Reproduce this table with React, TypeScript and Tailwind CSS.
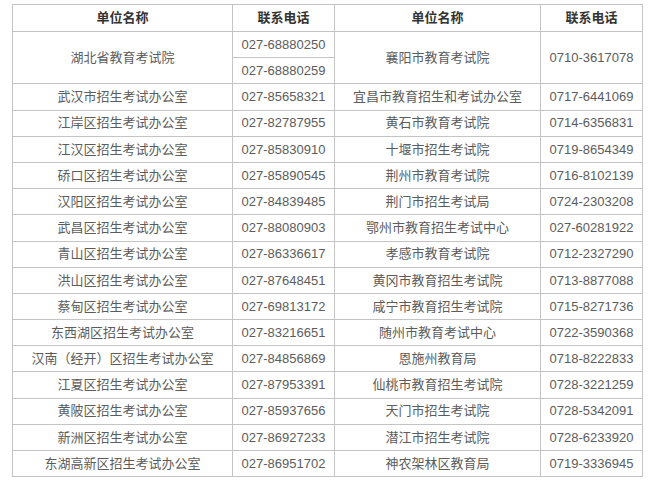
import React from "react";

type Row = { left: string; leftTel: string | string[]; right: string; rightTel: string };

const rows: Row[] = [
  { left: "湖北省教育考试院", leftTel: ["027-68880250", "027-68880259"], right: "襄阳市教育考试院", rightTel: "0710-3617078" },
  { left: "武汉市招生考试办公室", leftTel: "027-85658321", right: "宜昌市教育招生和考试办公室", rightTel: "0717-6441069" },
  { left: "江岸区招生考试办公室", leftTel: "027-82787955", right: "黄石市教育考试院", rightTel: "0714-6356831" },
  { left: "江汉区招生考试办公室", leftTel: "027-85830910", right: "十堰市招生考试院", rightTel: "0719-8654349" },
  { left: "硚口区招生考试办公室", leftTel: "027-85890545", right: "荆州市教育考试院", rightTel: "0716-8102139" },
  { left: "汉阳区招生考试办公室", leftTel: "027-84839485", right: "荆门市招生考试局", rightTel: "0724-2303208" },
  { left: "武昌区招生考试办公室", leftTel: "027-88080903", right: "鄂州市教育招生考试中心", rightTel: "027-60281922" },
  { left: "青山区招生考试办公室", leftTel: "027-86336617", right: "孝感市教育考试院", rightTel: "0712-2327290" },
  { left: "洪山区招生考试办公室", leftTel: "027-87648451", right: "黄冈市教育招生考试院", rightTel: "0713-8877088" },
  { left: "蔡甸区招生考试办公室", leftTel: "027-69813172", right: "咸宁市教育招生考试院", rightTel: "0715-8271736" },
  { left: "东西湖区招生考试办公室", leftTel: "027-83216651", right: "随州市教育考试中心", rightTel: "0722-3590368" },
  { left: "汉南（经开）区招生考试办公室", leftTel: "027-84856869", right: "恩施州教育局", rightTel: "0718-8222833" },
  { left: "江夏区招生考试办公室", leftTel: "027-87953391", right: "仙桃市教育招生考试院", rightTel: "0728-3221259" },
  { left: "黄陂区招生考试办公室", leftTel: "027-85937656", right: "天门市招生考试院", rightTel: "0728-5342091" },
  { left: "新洲区招生考试办公室", leftTel: "027-86927233", right: "潜江市招生考试院", rightTel: "0728-6233920" },
  { left: "东湖高新区招生考试办公室", leftTel: "027-86951702", right: "神农架林区教育局", rightTel: "0719-3336945" },
];

const cell = "border border-[#c4c4c4] text-center align-middle p-0 h-[26.2px]";
const head = "border border-[#c4c4c4] text-center align-middle p-0 h-[27px]";

export default function App() {
  return (
    <div className="w-[652px] h-[480px] bg-white pt-[4px] pl-[12px] font-['Liberation_Sans','Noto_Sans_CJK_SC',sans-serif] text-[13px] text-[#5c5c5c]">
      <table className="border-collapse table-fixed w-[630px]">
        <colgroup>
          <col className="w-[220px]" />
          <col className="w-[102px]" />
          <col className="w-[206px]" />
          <col className="w-[102px]" />
        </colgroup>
        <thead>
          <tr className="text-[#333] font-semibold">
            <td className={head}>单位名称</td>
            <td className={head}>联系电话</td>
            <td className={head}>单位名称</td>
            <td className={head}>联系电话</td>
          </tr>
        </thead>
        <tbody>
          {rows.map((r) =>
            Array.isArray(r.leftTel) ? (
              <React.Fragment key={r.left}>
                <tr>
                  <td rowSpan={2} className={cell}>{r.left}</td>
                  <td className={cell}>{r.leftTel[0]}</td>
                  <td rowSpan={2} className={cell}>{r.right}</td>
                  <td rowSpan={2} className={cell}>{r.rightTel}</td>
                </tr>
                <tr>
                  <td className={cell}>{r.leftTel[1]}</td>
                </tr>
              </React.Fragment>
            ) : (
              <tr key={r.left}>
                <td className={cell}>{r.left}</td>
                <td className={cell}>{r.leftTel}</td>
                <td className={cell}>{r.right}</td>
                <td className={cell}>{r.rightTel}</td>
              </tr>
            )
          )}
        </tbody>
      </table>
    </div>
  );
}
